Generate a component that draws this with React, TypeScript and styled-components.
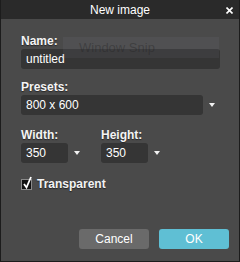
import React, { FC } from 'react'
import styled, { createGlobalStyle } from 'styled-components';

const GlobalStyle = createGlobalStyle`
    html, body {
        margin: 0;
        padding: 0;
        background: #1c1c1c;
    }
    * {
        box-sizing: border-box;
    }
`;

const DialogWrapper = styled.div`
    position: relative;
    width: 240px;
    height: 262px;
    display: flex;
    flex-direction: column;
    background: #4a4a4a;
    border: 1px solid #1c1c1c;
    border-top: none;
    font-family: "Liberation Sans", Arial, sans-serif;
    color: #f2f2f2;
`;

const TitleBar = styled.div`
    position: relative;
    height: 19px;
    flex: none;
    display: flex;
    align-items: center;
    justify-content: center;
    background: #2a2a2a;
    font-size: 12px;
    color: #ffffff;
`;

const CloseButton = styled.div`
    position: absolute;
    right: 6px;
    top: 7px;
    width: 7px;
    height: 7px;
    display: flex;
    cursor: pointer;
`;

const Body = styled.div`
    flex: 1;
    display: flex;
    flex-direction: column;
    padding: 15px 10px 12px 20px;
`;

const FieldLabel = styled.div<{ $gap?: number }>`
    font-size: 12px;
    font-weight: bold;
    line-height: 14px;
    margin-top: ${p => p.$gap || 0}px;
    margin-bottom: 1px;
    text-shadow: 0 1px 1px rgba(0, 0, 0, 0.5);
    color: #f4f4f4;
`;

const TextField = styled.div<{ $width: number }>`
    width: ${p => p.$width}px;
    height: 20px;
    display: flex;
    align-items: center;
    padding-left: 5px;
    background: #353535;
    border-radius: 3px;
    font-size: 12px;
    color: #ffffff;
`;

const SelectRow = styled.div`
    display: flex;
    align-items: center;
`;

const Arrow = styled.div<{ $space: number }>`
    margin-left: ${p => p.$space}px;
    width: 0;
    height: 0;
    border-left: 3.5px solid transparent;
    border-right: 3.5px solid transparent;
    border-top: 4px solid #f2f2f2;
`;

const SizeRow = styled.div`
    display: flex;
    margin-top: 13px;
    gap: 21px;
`;

const SizeColumn = styled.div`
    display: flex;
    flex-direction: column;
`;

const CheckRow = styled.div`
    display: flex;
    align-items: flex-end;
    margin-top: 14px;
    gap: 5px;
`;

const CheckBox = styled.div`
    position: relative;
    width: 11px;
    height: 11px;
    margin-bottom: 1px;
    background: #111111;
    border: 1px solid #8a8a8a;
`;

const CheckMark = styled.svg`
    position: absolute;
    left: 0;
    top: -4px;
`;

const CheckLabel = styled.span`
    font-size: 12px;
    font-weight: bold;
    line-height: 14px;
    text-shadow: 0 1px 1px rgba(0, 0, 0, 0.5);
`;

const ButtonBar = styled.div`
    margin-top: auto;
    display: flex;
    justify-content: flex-end;
    gap: 10px;
`;

const Button = styled.div<{ $primary?: boolean }>`
    width: 70px;
    height: 20px;
    display: flex;
    align-items: center;
    justify-content: center;
    border-radius: 3px;
    font-size: 12px;
    color: #ffffff;
    background: ${p => p.$primary ? '#5fbfd4' : '#6a6a6a'};
    cursor: pointer;
`;

const SnipGhost = styled.div`
    position: absolute;
    left: 62px;
    top: 37px;
    width: 156px;
    height: 21px;
    padding-left: 16px;
    display: flex;
    align-items: center;
    background: rgba(120, 125, 140, 0.12);
    font-size: 13px;
    color: rgba(30, 30, 32, 0.35);
    pointer-events: none;
`;

const App: FC = () => {
    return (
        <>
            <GlobalStyle />
            <DialogWrapper>
                <TitleBar>
                    New image
                    <CloseButton>
                        <svg width="7" height="7" viewBox="0 0 7 7">
                            <path d="M0.5 0.5 L6.5 6.5 M6.5 0.5 L0.5 6.5" stroke="#ffffff" strokeWidth="1.6" />
                        </svg>
                    </CloseButton>
                </TitleBar>
                <Body>
                    <FieldLabel>Name:</FieldLabel>
                    <TextField $width={199}>untitled</TextField>

                    <FieldLabel $gap={11}>Presets:</FieldLabel>
                    <SelectRow>
                        <TextField $width={182}>800 x 600</TextField>
                        <Arrow $space={6} />
                    </SelectRow>

                    <SizeRow>
                        <SizeColumn>
                            <FieldLabel>Width:</FieldLabel>
                            <SelectRow>
                                <TextField $width={47}>350</TextField>
                                <Arrow $space={6} />
                            </SelectRow>
                        </SizeColumn>
                        <SizeColumn>
                            <FieldLabel>Height:</FieldLabel>
                            <SelectRow>
                                <TextField $width={47}>350</TextField>
                                <Arrow $space={6} />
                            </SelectRow>
                        </SizeColumn>
                    </SizeRow>

                    <CheckRow>
                        <CheckBox>
                            <CheckMark width="11" height="14" viewBox="0 0 11 14">
                                <path d="M2 8 L4.5 11.5 L9 1" stroke="#ffffff" strokeWidth="1.8" fill="none" />
                            </CheckMark>
                        </CheckBox>
                        <CheckLabel>Transparent</CheckLabel>
                    </CheckRow>

                    <ButtonBar>
                        <Button>Cancel</Button>
                        <Button $primary>OK</Button>
                    </ButtonBar>
                </Body>
                <SnipGhost>Window Snip</SnipGhost>
            </DialogWrapper>
        </>
    )
}

export default App
